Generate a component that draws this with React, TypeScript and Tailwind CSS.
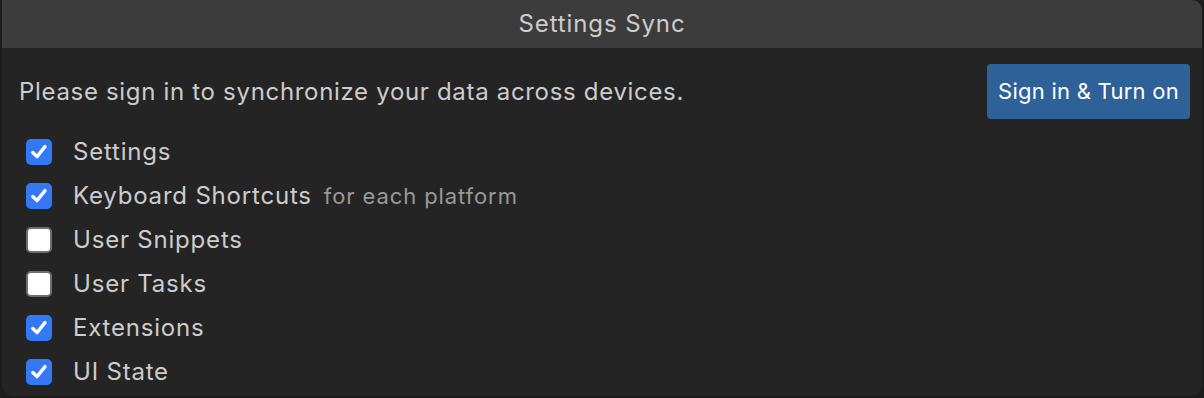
const items = [
  { label: "Settings", checked: true },
  { label: "Keyboard Shortcuts", note: "for each platform", checked: true },
  { label: "User Snippets", checked: false },
  { label: "User Tasks", checked: false },
  { label: "Extensions", checked: true },
  { label: "UI State", checked: true },
];

function Checkbox({ checked }: { checked: boolean }) {
  if (!checked) {
    return (
      <div className="w-[26px] h-[26px] rounded-[5px] bg-white border-[2.5px] border-[#6f6f6f] shrink-0" />
    );
  }
  return (
    <div className="w-[26px] h-[26px] rounded-[5px] bg-[#3478f6] flex items-center justify-center shrink-0">
      <svg width="20" height="20" viewBox="0 0 20 20" fill="none">
        <path
          d="M3.8 10.6 L8 14.6 L16 4.6"
          stroke="white"
          strokeWidth="3.4"
          strokeLinecap="round"
          strokeLinejoin="round"
        />
      </svg>
    </div>
  );
}

export default function App() {
  return (
    <div className="w-[1204px] h-[398px] bg-[#1c1c1c] font-['Inter','Noto_Sans',sans-serif] overflow-hidden">
      <div className="ml-[2px] w-[1200px] h-[396px] bg-[#242424] rounded-b-[10px] rounded-tr-[10px] overflow-hidden flex flex-col">
        <header className="h-[48px] bg-[#3c3c3c] flex items-center justify-center text-[#cccccc] text-[24px] tracking-[0.9px]">
          Settings Sync
        </header>
        <section className="flex items-start justify-between pl-[17px] pr-[12px] pt-[16px]">
          <p className="text-[#cccccc] text-[24px] tracking-[0.68px] leading-[55px]">
            Please sign in to synchronize your data across devices.
          </p>
          <button
            type="button"
            className="h-[55px] w-[203px] bg-[#2e6197] rounded-[4px] text-white text-[22px] tracking-[0.25px]"
          >
            Sign in &amp; Turn on
          </button>
        </section>
        <ul className="mt-[11px] pl-[24px] flex flex-col">
          {items.map((item) => (
            <li key={item.label} className="h-[44px] flex items-center gap-[21px]">
              <Checkbox checked={item.checked} />
              <span className="text-[#cccccc] text-[24px] tracking-[0.8px]">
                {item.label}
                {item.note && (
                  <span className="ml-[12px] text-[#999999] text-[22px] tracking-[0.9px]">{item.note}</span>
                )}
              </span>
            </li>
          ))}
        </ul>
      </div>
    </div>
  );
}
